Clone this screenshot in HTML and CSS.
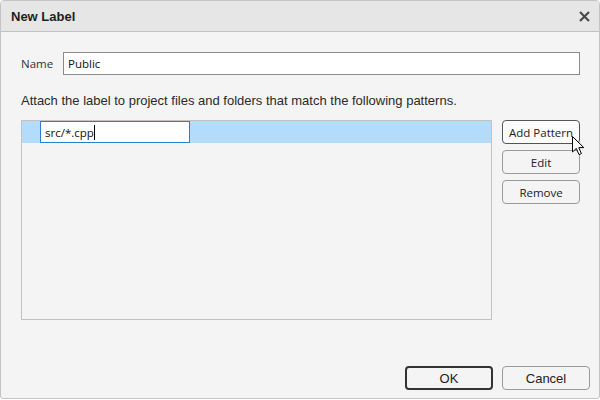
FILE: index.html
```html
<!DOCTYPE html>
<html lang="en">
<head>
  <meta charset="UTF-8">
  <meta name="viewport" content="width=device-width, initial-scale=1.0">
  <title>New Label</title>
  <link rel="stylesheet" href="styles.css">
</head>
<body>

<div class="dialog">
  <div class="titlebar">
    <span class="title">New Label</span>
    <svg class="close" width="11" height="11" viewBox="0 0 11 11">
      <path d="M1 1 L10 10 M10 1 L1 10" stroke="#4a4a4a" stroke-width="2.2" fill="none"/>
    </svg>
  </div>

  <div class="content">
    <div class="name-row">
      <label for="labelName">Name</label>
      <input type="text" id="labelName" class="text-input" value="Public">
    </div>

    <p class="hint">Attach the label to project files and folders that match the following patterns.</p>

    <div class="pattern-area">
      <div class="pattern-list">
        <div class="pattern-row selected">
          <div class="pattern-edit">src/*.cpp<span class="caret"></span></div>
        </div>
      </div>
      <div class="side-buttons">
        <button class="btn btn-hover">Add Pattern</button>
        <button class="btn">Edit</button>
        <button class="btn">Remove</button>
      </div>
    </div>
  </div>

  <div class="footer">
    <button class="dlg-btn default">OK</button>
    <button class="dlg-btn">Cancel</button>
  </div>

  <!-- mouse pointer over Add Pattern -->
  <svg class="pointer" width="13" height="20" viewBox="0 0 13 20">
    <path d="M0.5 0.5 L0.5 16 L4.3 12.4 L7 18.6 L9.4 17.6 L6.8 11.6 L11.8 11.6 Z" fill="#fff" stroke="#000" stroke-width="1" stroke-linejoin="round"/>
  </svg>
</div>

</body>
</html>
```

FILE: styles.css
```css
* {
  box-sizing: border-box;
}
body {
  margin: 0;
  padding: 0;
  width: 600px;
  height: 400px;
  background: #fff;
  font-family: "Open Sans", "Noto Sans", sans-serif;
  font-size: 12px;
  color: #222;
}
.dialog {
  position: relative;
  width: 600px;
  height: 399px;
  border: 1px solid #c4c4c4;
  border-radius: 4px 4px 3px 3px;
  background: #f4f4f4;
  display: flex;
  flex-direction: column;
  overflow: hidden;
}
.titlebar {
  height: 31px;
  flex-shrink: 0;
  background: #e6e6e6;
  border-bottom: 1px solid #c2c2c2;
  display: flex;
  justify-content: space-between;
  align-items: center;
  padding: 0 9px 0 10px;
}
.title {
  font-family: "Liberation Sans", Arial, sans-serif;
  font-weight: bold;
  font-size: 13px;
  color: #1e1e1e;
}
.content {
  flex: 1;
  padding: 20px 19px 0 20px;
  display: flex;
  flex-direction: column;
}
.name-row {
  display: flex;
  align-items: center;
  gap: 10px;
}
.name-row label {
  width: 32px;
  font-size: 11.5px;
  color: #333;
}
.text-input {
  flex: 1;
  height: 23px;
  border: 1px solid #8a8a8a;
  background: #fff;
  padding: 0 4px;
  font-family: "Open Sans", "Noto Sans", sans-serif;
  font-size: 11.5px;
  color: #111;
  outline: none;
}
.hint {
  font-family: "Liberation Sans", Arial, sans-serif;
  font-size: 13px;
  line-height: 16px;
  color: #2a2a2a;
  margin: 18px 0 11px 0;
}
.pattern-area {
  display: flex;
  gap: 10px;
}
.pattern-list {
  width: 472px;
  height: 200px;
  border: 1px solid #c2c2c2;
  background: #f4f4f4;
}
.pattern-row {
  height: 22px;
  padding-left: 18px;
}
.pattern-row.selected {
  background: #b3dbfc;
}
.pattern-edit {
  width: 150px;
  height: 22px;
  background: #fff;
  border: 1px solid #2a7fd0;
  padding: 0 4px;
  font-size: 11.5px;
  color: #111;
  display: flex;
  align-items: center;
}
.caret {
  display: inline-block;
  width: 1px;
  height: 15px;
  background: #000;
}
.side-buttons {
  width: 78px;
  display: flex;
  flex-direction: column;
  gap: 6px;
}
.btn {
  height: 24px;
  border: 1px solid #9a9a9a;
  border-radius: 4px;
  background: #f4f4f4;
  font-family: "Open Sans", "Noto Sans", sans-serif;
  font-size: 11.5px;
  color: #222;
  padding: 0;
}
.btn-hover {
  border-color: #555;
  background: #fcfcfc;
}
.footer {
  height: 60px;
  flex-shrink: 0;
  display: flex;
  justify-content: flex-end;
  align-items: flex-end;
  gap: 9px;
  padding: 0 9px 8px 0;
}
.dlg-btn {
  width: 88px;
  height: 24px;
  border: 1px solid #9a9a9a;
  border-radius: 4px;
  background: #f4f4f4;
  font-family: "Liberation Sans", Arial, sans-serif;
  font-size: 13px;
  color: #222;
  padding: 0;
}
.dlg-btn.default {
  border: 2px solid #333;
}
.pointer {
  position: absolute;
  left: 571px;
  top: 135px;
}
```
